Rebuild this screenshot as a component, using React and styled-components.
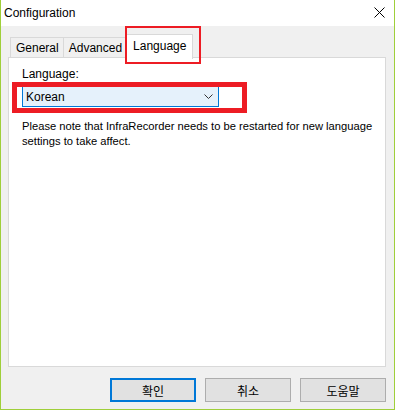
import React from 'react';
import styled, { createGlobalStyle } from 'styled-components';

const GlobalStyle = createGlobalStyle`
  html, body {
    margin: 0;
    padding: 0;
    background: #f0f0f0;
  }
  body {
    font-family: "Liberation Sans", "Noto Sans CJK KR", sans-serif;
    font-size: 12px;
    color: #000;
  }
`;

const Window = styled.div`
  width: 395px;
  height: 410px;
  box-sizing: border-box;
  border: 1px solid #9fcf3a;
  border-top: none;
  display: flex;
  flex-direction: column;
  background: #f0f0f0;
  position: relative;
`;

const TitleBar = styled.div`
  height: 26px;
  background: #fff;
  display: flex;
  align-items: center;
  justify-content: space-between;
  padding: 0 9px 0 3px;
  font-size: 12px;
`;

const CloseButton = styled.div`
  width: 11px;
  height: 11px;
  display: flex;
  margin-top: -1px;
`;

const Body = styled.div`
  flex: 1;
  display: flex;
  flex-direction: column;
  padding: 8px 8px 7px 7px;
`;

const TabRow = styled.div`
  display: flex;
  align-items: flex-end;
  padding-left: 2px;
  height: 24px;
  position: relative;
  z-index: 1;
  margin-bottom: -1px;
`;

const Tab = styled.div`
  box-sizing: border-box;
  height: ${({ active }) => (active ? '25px' : '21px')};
  padding: ${({ active }) => (active ? '0 6px 2px 6px' : '0 4px 0 5px')};
  display: flex;
  align-items: center;
  background: ${({ active }) => (active ? '#fff' : '#f0f0f0')};
  border: 1px solid #d9d9d9;
  border-bottom: ${({ active }) => (active ? 'none' : '1px solid #d9d9d9')};
  border-left: ${({ first, active }) => (first || active ? '1px solid #d9d9d9' : 'none')};
  margin-left: ${({ active }) => (active ? '-1px' : '0')};
  margin-bottom: ${({ active }) => (active ? '-1px' : '0')};
  position: relative;
`;

const Highlight = styled.div`
  position: absolute;
  border: ${({ thick }) => thick}px solid #ed1c24;
  box-sizing: border-box;
  pointer-events: none;
`;

const Panel = styled.div`
  flex: 1;
  background: #fff;
  border: 1px solid #d9d9d9;
  padding: 8px 13px;
  display: flex;
  flex-direction: column;
  position: relative;
`;

const Label = styled.div`
  line-height: 16px;
  margin-bottom: 4px;
`;

const Select = styled.div`
  width: 197px;
  height: 21px;
  box-sizing: border-box;
  background: #e5f1fb;
  border: 1px solid #0078d7;
  display: flex;
  align-items: center;
  justify-content: space-between;
  padding: 0 5px 0 3px;
  position: relative;
`;

const Note = styled.div`
  margin-top: 12px;
  line-height: 15px;
  font-size: 11.2px;
  white-space: nowrap;
`;

const ButtonRow = styled.div`
  display: flex;
  justify-content: flex-end;
  gap: 9px;
  margin-top: 11px;
`;

const Button = styled.div`
  width: 86px;
  height: 24px;
  box-sizing: border-box;
  background: #e1e1e1;
  border: ${({ primary }) => (primary ? '2px solid #0078d7' : '1px solid #adadad')};
  display: flex;
  align-items: center;
  justify-content: center;
  font-size: 12px;
`;

const CloseIcon = () => (
  <svg width="11" height="11" viewBox="0 0 11 11">
    <path d="M0.5 0.5 L10.5 10.5 M10.5 0.5 L0.5 10.5" stroke="#000" strokeWidth="1" />
  </svg>
);

const Chevron = () => (
  <svg width="9" height="5" viewBox="0 0 9 5">
    <path d="M0.5 0.5 L4.5 4.5 L8.5 0.5" stroke="#333" strokeWidth="1" fill="none" />
  </svg>
);

const App = () => (
  <>
    <GlobalStyle />
    <Window>
      <TitleBar>
        <span>Configuration</span>
        <CloseButton>
          <CloseIcon />
        </CloseButton>
      </TitleBar>
      <Body>
        <TabRow>
          <Tab first>General</Tab>
          <Tab>Advanced</Tab>
          <Tab active>
            Language
            <Highlight thick={2} style={{ left: -2, top: -9, width: 76, height: 38 }} />
          </Tab>
        </TabRow>
        <Panel>
          <Label>Language:</Label>
          <Select>
            <span>Korean</span>
            <Chevron />
            <Highlight thick={5} style={{ left: -11, top: -5, width: 235, height: 31 }} />
          </Select>
          <Note>
            Please note that InfraRecorder needs to be restarted for new language
            <br />
            settings to take affect.
          </Note>
        </Panel>
        <ButtonRow>
          <Button primary>확인</Button>
          <Button>취소</Button>
          <Button>도움말</Button>
        </ButtonRow>
      </Body>
    </Window>
  </>
);

export default App;
